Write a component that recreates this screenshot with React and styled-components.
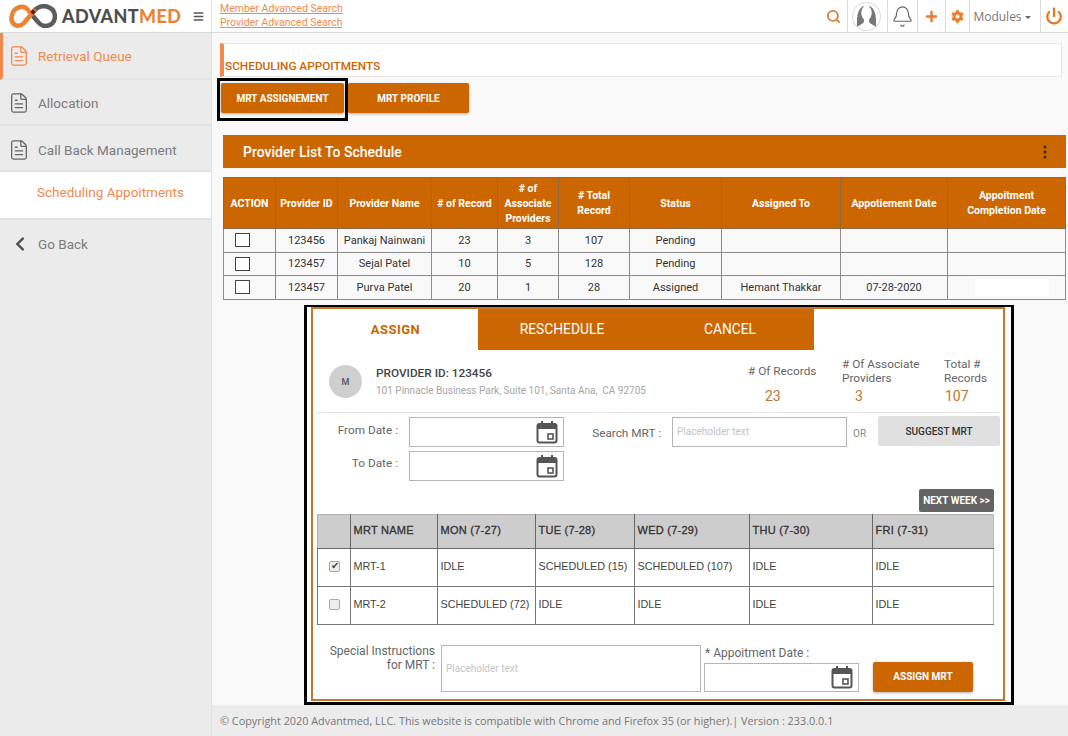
import React from "react";
import styled, { createGlobalStyle } from "styled-components";
import { FileText, Search, Bell, Power } from "lucide-react";
import { FaPlus, FaCog, FaChevronLeft, FaBars } from "react-icons/fa";
import { BsThreeDotsVertical } from "react-icons/bs";

const orange = "#cc6600";
const soft = "#ef8a4c";

const GlobalStyle = createGlobalStyle`
  * { box-sizing: border-box; }
  html, body { margin: 0; padding: 0; background: #f9f9f9; }
  body { font-family: Roboto, "Liberation Sans", sans-serif; color: #444; }
`;

const Page = styled.div`
  width: 1068px;
  height: 736px;
  overflow: hidden;
  display: flex;
  flex-direction: column;
`;

const Header = styled.header`
  height: 33px;
  flex: none;
  display: flex;
  align-items: stretch;
  background: #fff;
  border-bottom: 1px solid #d9d9d9;
`;

const LogoArea = styled.div`
  width: 212px;
  display: flex;
  align-items: center;
  padding-left: 9px;
  border-right: 1px solid #e2e2e2;
`;

const LogoText = styled.span`
  margin-left: 5px;
  font-family: Lato, "Open Sans", sans-serif;
  font-weight: 700;
  font-size: 18px;
  letter-spacing: 0.45px;
  -webkit-text-stroke: 0.2px currentColor;
  color: #4b4b4b;
  b { color: #ee8232; font-weight: 700; }
`;

const Burger = styled.span`
  margin-left: 11px;
  display: flex;
  color: #555;
  font-size: 11px;
`;

const Links = styled.div`
  padding: 2px 0 0 8px;
  display: flex;
  flex-direction: column;
  a {
    font-size: 10.5px;
    line-height: 14px;
    color: ${soft};
    text-decoration: underline;
  }
`;

const HeaderTools = styled.div`
  margin-left: auto;
  display: flex;
  align-items: stretch;
`;

const Tool = styled.div`
  width: ${(p) => p.$w}px;
  padding-right: ${(p) => p.$shift || 0}px;
  display: flex;
  align-items: center;
  justify-content: center;
  border-left: ${(p) => (p.$plain ? "none" : "1px solid #dcdcdc")};
  color: ${(p) => p.$color || orange};
`;

const Avatar = styled.svg`
  width: 29px;
  height: 29px;
  flex: none;
`;

const Modules = styled.span`
  font-family: "Open Sans", sans-serif;
  font-size: 12px;
  color: #777;
  &::after {
    content: "";
    display: inline-block;
    margin-left: 3px;
    vertical-align: middle;
    border: 3px solid transparent;
    border-top-color: #666;
    border-bottom: none;
  }
`;

const Body = styled.div`
  flex: 1;
  min-height: 0;
  display: flex;
`;

const Sidebar = styled.nav`
  width: 212px;
  flex: none;
  background: #ebebeb;
  border-right: 1px solid #e2e2e2;
`;

const NavItem = styled.div`
  height: ${(p) => p.$h}px;
  display: flex;
  align-items: center;
  gap: ${(p) => p.$gap || 8}px;
  padding: ${(p) => p.$top || 0}px 0 ${(p) => p.$bottom || 0}px ${(p) => p.$pad || 8}px;
  font-size: 13.5px;
  color: ${(p) => (p.$active ? soft : "#7c7c7c")};
  background: ${(p) => (p.$white ? "#fff" : "transparent")};
  border-left: ${(p) => (p.$bar ? `3px solid ${soft}` : "none")};
  border-bottom: ${(p) => (p.$last ? "none" : "2px solid #e2e2e2")};
  svg { flex: none; }
`;

const Main = styled.main`
  flex: 1;
  min-width: 0;
  display: flex;
  flex-direction: column;
`;

const Content = styled.div`
  flex: 1;
  padding: 10px 2px 0 8px;
`;

const TitleBox = styled.div`
  height: 34px;
  margin-right: 4px;
  background: #fff;
  border: 1px solid #e6e6e6;
  border-left: 4px solid ${soft};
  display: flex;
  align-items: flex-end;
  padding: 0 0 3px 1px;
  font-size: 11.8px;
  font-weight: 500;
  color: ${orange};
`;

const ButtonRow = styled.div`
  margin: 1px 0 14px -3px;
  display: flex;
  align-items: flex-start;
`;

const BlackFrame = styled.div`
  padding: 2px 1px 5px 1px;
  border: 3px solid #000;
`;

const OrangeButton = styled.button`
  width: ${(p) => p.$w}px;
  height: 30px;
  padding: 0;
  border: none;
  border-radius: 2px;
  background: ${orange};
  box-shadow: 0 1px 3px rgba(0, 0, 0, 0.3);
  color: #fff;
  font-family: Roboto, sans-serif;
  font-size: 10px;
  font-weight: 700;
`;

const ProfileButton = styled(OrangeButton)`
  margin-top: 5px;
`;

const Bar = styled.div`
  height: 33px;
  margin: 0 0 9px 3px;
  padding: 0 13px 0 20px;
  display: flex;
  align-items: center;
  justify-content: space-between;
  background: ${orange};
  color: #fff;
  font-size: 14px;
  font-weight: 500;
  svg { color: #3a2a1a; }
`;

const ProviderTable = styled.table`
  margin-left: 3px;
  width: 842px;
  table-layout: fixed;
  border-collapse: collapse;
  font-size: 11px;
  th {
    height: 51px;
    padding: 0 2px;
    background: ${orange};
    color: #fff;
    font-size: 10.5px;
    font-weight: 700;
    line-height: 15px;
    border: 1px solid #8a6a4a;
  }
  td {
    height: 23.6px;
    padding: 0;
    text-align: center;
    color: #333;
    background: #f9f9f9;
    border: 1px solid #8c8c8c;
  }
`;

const Box = styled.span`
  display: block;
  width: 15px;
  height: 14px;
  margin-left: 11px;
  background: #fff;
  border: 1px solid #444;
`;

const Patch = styled.span`
  display: block;
  width: 74px;
  height: 17px;
  margin-left: 27px;
  background: #fff;
`;

const AssignFrame = styled.section`
  margin: 5px 0 0 84px;
  width: 710px;
  height: 400px;
  padding: 0 6px 1px 4px;
  background: #fff;
  border: 3px solid #000;
  border-top-width: 2px;
`;

const AssignInner = styled.div`
  height: 100%;
  border: 2px solid #c8742c;
  background: #fff;
  display: flex;
  flex-direction: column;
`;

const Tabs = styled.div`
  display: flex;
  height: 41px;
  flex: none;
`;

const Tab = styled.div`
  width: ${(p) => p.$w}px;
  display: flex;
  align-items: center;
  justify-content: center;
  font-size: ${(p) => (p.$active ? 13 : 13.8)}px;
  font-weight: ${(p) => (p.$active ? 700 : 400)};
  letter-spacing: ${(p) => (p.$active ? "0.5px" : "0")};
  background: ${(p) => (p.$active ? "#fff" : orange)};
  color: ${(p) => (p.$active ? orange : "#fff")};
`;

const ProviderRow = styled.div`
  height: 63px;
  flex: none;
  margin: 0 3px;
  padding-left: 13px;
  display: flex;
  align-items: center;
  border-bottom: 1px solid #e4e4e4;
`;

const Circle = styled.div`
  width: 33px;
  height: 33px;
  margin-top: 2px;
  border-radius: 50%;
  background: #cfcfcf;
  display: flex;
  align-items: center;
  justify-content: center;
  font-size: 9px;
  font-weight: 500;
  color: #555;
`;

const ProviderInfo = styled.div`
  margin-left: 14px;
  display: flex;
  flex-direction: column;
  gap: 5px;
  strong {
    font-size: 11.8px;
    font-weight: 500;
    color: #444;
  }
  span {
    font-size: 10px;
    color: #a5a5a5;
  }
`;

const Stats = styled.div`
  margin-left: auto;
  display: grid;
  grid-template-columns: 94px 102px 56px;
`;

const Stat = styled.div`
  display: flex;
  flex-direction: column;
  font-size: 11.8px;
  line-height: 14px;
  color: #666;
`;

const StatLabel = styled.div`
  min-height: 28px;
  display: flex;
  align-items: center;
`;

const StatValue = styled.div`
  margin-top: 3px;
  padding-left: ${(p) => p.$pad}px;
  font-size: 14px;
  line-height: 16px;
  color: #c8742c;
`;

const FilterRow = styled.div`
  flex: none;
  display: flex;
  padding-top: 4px;
`;

const DateColumn = styled.div`
  display: flex;
  flex-direction: column;
  gap: 4px;
`;

const Field = styled.div`
  display: flex;
  align-items: center;
  margin-left: ${(p) => p.$left || 0}px;
`;

const SearchField = styled(Field)`
  align-self: flex-start;
`;

const Label = styled.label`
  width: ${(p) => p.$w}px;
  margin: ${(p) => p.$nudge || "0 0 5px 0"};
  padding-right: 11px;
  white-space: nowrap;
  text-align: right;
  font-size: 11.8px;
  color: #666;
  flex: none;
`;

const TextBox = styled.div`
  width: ${(p) => p.$w}px;
  height: ${(p) => p.$h || 30}px;
  padding: 0 5px 0 4px;
  display: flex;
  align-items: center;
  justify-content: ${(p) => (p.$date ? "flex-end" : "flex-start")};
  background: #fff;
  border: 1px solid #b5b5b5;
  font-size: 10px;
  color: #c4c4c4;
  svg { flex: none; }
`;

const Or = styled.span`
  margin: 3px 12px 0 6px;
  font-size: 10px;
  color: #888;
`;

const GreyButton = styled.button`
  width: 122px;
  height: 30px;
  margin-top: -1px;
  padding: 0;
  border: none;
  border-radius: 2px;
  background: #e0e0e0;
  font-family: Roboto, sans-serif;
  font-size: 10px;
  font-weight: 500;
  color: #333;
`;

const NextRow = styled.div`
  flex: none;
  margin-top: 8px;
  padding-right: 9px;
  display: flex;
  justify-content: flex-end;
`;

const NextButton = styled.button`
  width: 75px;
  height: 23px;
  padding: 0;
  border: none;
  border-radius: 2px;
  background: #636363;
  font-family: Roboto, sans-serif;
  font-size: 10px;
  font-weight: 700;
  color: #fff;
`;

const MrtTable = styled.table`
  flex: none;
  margin: 2px 0 0 3.5px;
  width: 676px;
  table-layout: fixed;
  border-collapse: collapse;
  font-family: "Liberation Sans", Arial, sans-serif;
  font-size: 10.8px;
  color: #444;
  th {
    height: 34px;
    padding: 0 0 2px 3px;
    text-align: left;
    font-size: 11px;
    font-weight: 400;
    letter-spacing: 0.25px;
    -webkit-text-stroke: 0.3px #333;
    color: #333;
    background: #cdcdcd;
    border: 1px solid #b0b0b0;
    border-right-color: #666;
    border-bottom-color: #666;
  }
  td {
    height: 38px;
    padding: 0 0 2px 3px;
    white-space: nowrap;
    border: 1px solid #777;
  }
  th:last-child, td:last-child { border-right-color: #bbb; }
`;

const Tick = styled.input`
  appearance: none;
  display: block;
  width: 11px;
  height: 11px;
  margin: 0 0 0 8px;
  border: 1px solid #a8a8a8;
  border-radius: 2px;
  background: #eee;
  position: relative;
  &:checked::after {
    content: "✔";
    position: absolute;
    left: 1px;
    top: -2px;
    font-size: 10px;
    color: #444;
  }
`;

const BottomRow = styled.div`
  flex: none;
  margin-top: 19px;
  display: flex;
  align-items: flex-end;
`;

const NoteLabel = styled.label`
  width: 122px;
  margin-bottom: 20px;
  text-align: right;
  font-size: 12px;
  line-height: 14px;
  color: #666;
  flex: none;
`;

const Note = styled.div`
  width: 260px;
  height: 47px;
  margin-left: 6px;
  padding-left: 4px;
  display: flex;
  align-items: center;
  background: #fff;
  border: 1px solid #b5b5b5;
  font-size: 10px;
  color: #c4c4c4;
`;

const DateField = styled.div`
  margin-left: 3px;
  display: flex;
  flex-direction: column;
  gap: 3px;
  label {
    padding-left: 1px;
    font-size: 12px;
    line-height: 14px;
    color: #666;
  }
`;

const AssignButton = styled(OrangeButton)`
  margin-left: 14px;
`;

const Footer = styled.footer`
  height: 31px;
  flex: none;
  display: flex;
  align-items: center;
  padding-left: 8px;
  background: #ececec;
  font-family: "Open Sans", sans-serif;
  font-size: 10.85px;
  color: #777;
`;

const Logo = () => (
  <svg width="48" height="24" viewBox="8 4 48 24" fill="none" strokeWidth="4.5" strokeLinecap="round">
    <path d="M33 11 Q37 6 44 6 Q54 8 54 17 Q53 26 44 26 Q40 26 37 22 L31 15" stroke="#5c5c5c" />
    <path d="M33 11 L23 23 Q19 27 14 25 Q9 22 11 15 Q12 9 19 7 Q24 6 27 10 L30 14" stroke="#ee8232" />
    <rect x="30" y="10" width="4" height="4" fill="#6b1a1a" transform="rotate(45 32 12)" />
  </svg>
);

const Calendar = () => (
  <svg width="22" height="24" viewBox="0 0 22 24" fill="none">
    <rect x="1.5" y="4" width="19" height="18.5" rx="2" stroke="#555" strokeWidth="2" />
    <rect x="1.5" y="4" width="19" height="5" fill="#555" />
    <rect x="5" y="1" width="2" height="4" fill="#555" />
    <rect x="15" y="1" width="2" height="4" fill="#555" />
    <rect x="12" y="14" width="5" height="5" stroke="#555" strokeWidth="1.6" />
  </svg>
);

const providers = [
  { id: "123456", name: "Pankaj Nainwani", records: 23, assoc: 3, total: 107, status: "Pending" },
  { id: "123457", name: "Sejal Patel", records: 10, assoc: 5, total: 128, status: "Pending" },
  { id: "123457", name: "Purva Patel", records: 20, assoc: 1, total: 28, status: "Assigned", to: "Hemant Thakkar", date: "07-28-2020", patch: true },
];

const providerCols = [52, 62, 94, 66, 61, 71, 92, 119, 107, 118];
const mrtCols = [33, 87, 98, 99, 115, 123, 121];

const mrts = [
  { name: "MRT-1", checked: true, days: ["IDLE", "SCHEDULED (15)", "SCHEDULED (107)", "IDLE", "IDLE"] },
  { name: "MRT-2", checked: false, days: ["SCHEDULED (72)", "IDLE", "IDLE", "IDLE", "IDLE"] },
];

export default function App() {
  return (
    <Page>
      <GlobalStyle />
      <Header>
        <LogoArea>
          <Logo />
          <LogoText>
            ADVANT<b>MED</b>
          </LogoText>
          <Burger>
            <FaBars />
          </Burger>
        </LogoArea>
        <Links>
          <a>Member Advanced Search</a>
          <a>Provider Advanced Search</a>
        </Links>
        <HeaderTools>
          <Tool $w={24} $plain $shift={3} $color="#e07a35">
            <Search size={15} strokeWidth={3} />
          </Tool>
          <Tool $w={40} $shift={3}>
            <Avatar viewBox="0 0 28 28">
              <circle cx="14" cy="14" r="13.5" fill="#fff" stroke="#ddd" />
              <path d="M12 3.5 Q3.5 6 5 24 L10.5 20.5 Q12 19.5 11.5 17 Q8.5 13 9 9.5 Q9.5 6 12 3.5Z" fill="#777" />
              <path d="M16 3.5 Q24.5 6 23 24 L17.5 20.5 Q16 19.5 16.5 17 Q19.5 13 19 9.5 Q18.5 6 16 3.5Z" fill="#777" />
            </Avatar>
          </Tool>
          <Tool $w={30} $color="#666">
            <Bell size={23} strokeWidth={1.2} />
          </Tool>
          <Tool $w={28} $shift={1} $color="#ee7a2b">
            <FaPlus size={13} />
          </Tool>
          <Tool $w={24} $shift={1} $color="#ee7a2b">
            <FaCog size={13} />
          </Tool>
          <Tool $w={71} $shift={6}>
            <Modules>Modules</Modules>
          </Tool>
          <Tool $w={28} $shift={1} $color="#e8761f">
            <Power size={18} strokeWidth={3} />
          </Tool>
        </HeaderTools>
      </Header>
      <Body>
        <Sidebar>
          <NavItem $h={47} $bar $active $pad={5}>
            <FileText size={22} strokeWidth={1.4} />
            Retrieval Queue
          </NavItem>
          <NavItem $h={46} $top={2}>
            <FileText size={22} strokeWidth={1.4} color="#666" />
            Allocation
          </NavItem>
          <NavItem $h={46} $top={4}>
            <FileText size={22} strokeWidth={1.4} color="#666" />
            Call Back Management
          </NavItem>
          <NavItem $h={48} $pad={37} $bottom={6} $active $white>
            Scheduling Appoitments
          </NavItem>
          <NavItem $h={48} $pad={12} $gap={10} $last>
            <FaChevronLeft size={16} color="#555" />
            Go Back
          </NavItem>
        </Sidebar>
        <Main>
          <Content>
            <TitleBox>SCHEDULING APPOITMENTS</TitleBox>
            <ButtonRow>
              <BlackFrame>
                <OrangeButton $w={123}>MRT ASSIGNEMENT</OrangeButton>
              </BlackFrame>
              <ProfileButton $w={121}>MRT PROFILE</ProfileButton>
            </ButtonRow>
            <Bar>
              Provider List To Schedule
              <BsThreeDotsVertical size={16} />
            </Bar>
            <ProviderTable>
              <colgroup>
                {providerCols.map((w, i) => (
                  <col key={i} width={w} />
                ))}
              </colgroup>
              <thead>
                <tr>
                  <th>ACTION</th>
                  <th>Provider ID</th>
                  <th>Provider Name</th>
                  <th># of Record</th>
                  <th># of Associate Providers</th>
                  <th># Total Record</th>
                  <th>Status</th>
                  <th>Assigned To</th>
                  <th>Appotiement Date</th>
                  <th>
                    Appoitment
                    <br />
                    Completion Date
                  </th>
                </tr>
              </thead>
              <tbody>
                {providers.map((p, i) => (
                  <tr key={i}>
                    <td>
                      <Box />
                    </td>
                    <td>{p.id}</td>
                    <td>{p.name}</td>
                    <td>{p.records}</td>
                    <td>{p.assoc}</td>
                    <td>{p.total}</td>
                    <td>{p.status}</td>
                    <td>{p.to}</td>
                    <td>{p.date}</td>
                    <td>{p.patch && <Patch />}</td>
                  </tr>
                ))}
              </tbody>
            </ProviderTable>
            <AssignFrame>
              <AssignInner>
                <Tabs>
                  <Tab $w={165} $active>
                    ASSIGN
                  </Tab>
                  <Tab $w={168}>RESCHEDULE</Tab>
                  <Tab $w={168}>CANCEL</Tab>
                </Tabs>
                <ProviderRow>
                  <Circle>M</Circle>
                  <ProviderInfo>
                    <strong>PROVIDER ID: 123456</strong>
                    <span>101 Pinnacle Business Park, Suite 101, Santa Ana,&nbsp; CA 92705</span>
                  </ProviderInfo>
                  <Stats>
                    <Stat>
                      <StatLabel># Of Records</StatLabel>
                      <StatValue $pad={17}>23</StatValue>
                    </Stat>
                    <Stat>
                      <StatLabel>
                        # Of Associate
                        <br />
                        Providers
                      </StatLabel>
                      <StatValue $pad={13}>3</StatValue>
                    </Stat>
                    <Stat>
                      <StatLabel>
                        Total #
                        <br />
                        Records
                      </StatLabel>
                      <StatValue $pad={1}>107</StatValue>
                    </Stat>
                  </Stats>
                </ProviderRow>
                <FilterRow>
                  <DateColumn>
                    <Field>
                      <Label $w={96} $nudge="0 0 3px 0">
                        From Date :
                      </Label>
                      <TextBox $w={155} $date>
                        <Calendar />
                      </TextBox>
                    </Field>
                    <Field>
                      <Label $w={96}>To Date :</Label>
                      <TextBox $w={155} $date>
                        <Calendar />
                      </TextBox>
                    </Field>
                  </DateColumn>
                  <SearchField $left={28}>
                    <Label $w={80} $nudge="2px 0 0 0">
                      Search MRT :
                    </Label>
                    <TextBox $w={175}>Placeholder text</TextBox>
                    <Or>OR</Or>
                    <GreyButton>SUGGEST MRT</GreyButton>
                  </SearchField>
                </FilterRow>
                <NextRow>
                  <NextButton>NEXT WEEK &gt;&gt;</NextButton>
                </NextRow>
                <MrtTable>
                  <colgroup>
                    {mrtCols.map((w, i) => (
                      <col key={i} width={w} />
                    ))}
                  </colgroup>
                  <thead>
                    <tr>
                      <th />
                      <th>MRT NAME</th>
                      <th>MON (7-27)</th>
                      <th>TUE (7-28)</th>
                      <th>WED (7-29)</th>
                      <th>THU (7-30)</th>
                      <th>FRI (7-31)</th>
                    </tr>
                  </thead>
                  <tbody>
                    {mrts.map((m) => (
                      <tr key={m.name}>
                        <td>
                          <Tick type="checkbox" defaultChecked={m.checked} />
                        </td>
                        <td>{m.name}</td>
                        {m.days.map((d, i) => (
                          <td key={i}>{d}</td>
                        ))}
                      </tr>
                    ))}
                  </tbody>
                </MrtTable>
                <BottomRow>
                  <NoteLabel>
                    Special Instructions
                    <br />
                    for MRT :
                  </NoteLabel>
                  <Note>Placeholder text</Note>
                  <DateField>
                    <label>* Appoitment Date :</label>
                    <TextBox $w={155} $h={29} $date>
                      <Calendar />
                    </TextBox>
                  </DateField>
                  <AssignButton $w={100}>ASSIGN MRT</AssignButton>
                </BottomRow>
              </AssignInner>
            </AssignFrame>
          </Content>
          <Footer>© Copyright 2020 Advantmed, LLC. This website is compatible with Chrome and Firefox 35 (or higher).| Version : 233.0.0.1</Footer>
        </Main>
      </Body>
    </Page>
  );
}
